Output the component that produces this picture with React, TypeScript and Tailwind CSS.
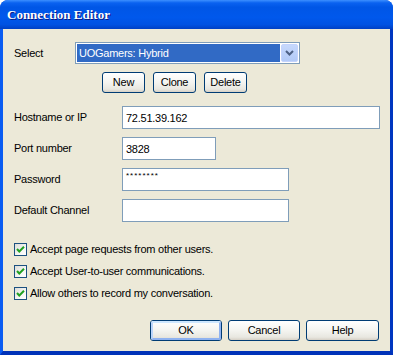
import React from "react";

const font = { fontFamily: '"Liberation Sans", Arial, sans-serif' };
const txt = "text-[11px] tracking-[-0.25px] text-black";

function XPButton({ label, w, def }: { label: string; w: number; def?: boolean }) {
  return (
    <div
      className={`h-[21px] rounded-[3px] border border-[#003C74] bg-[linear-gradient(to_bottom,#FFFFFF_0%,#F4F4F0_50%,#E8E7E0_85%,#D6D0C5_100%)] flex items-center justify-center ${txt}`}
      style={{ width: w }}
    >
      {def ? (
        <div className="w-full h-full rounded-[2px] border-[2px] border-[#8FB2F0] border-t-[#CEE7FF] border-l-[#BCD5FA] flex items-center justify-center">
          {label}
        </div>
      ) : (
        label
      )}
    </div>
  );
}

function Check({ label }: { label: string }) {
  return (
    <div className="h-[14px] flex items-center">
      <div className="w-[13px] h-[13px] border border-[#1C5180] bg-[linear-gradient(135deg,#DCDCD7_0%,#F6F6F4_60%,#FFFFFF_100%)] flex items-center justify-center">
        <svg width="11" height="11" viewBox="0 0 11 11">
          <path d="M2 5 L4.3 7.5 L9 2.8" fill="none" stroke="#21A121" strokeWidth="2" />
        </svg>
      </div>
      <span className={`ml-[3px] ${txt}`}>{label}</span>
    </div>
  );
}

function Field({ label, w, children }: { label: string; w: number; children?: React.ReactNode }) {
  return (
    <div className="flex items-center h-[23px]">
      <div className={`w-[108px] ${txt}`}>{label}</div>
      <div
        className={`h-[23px] border border-[#7F9DB9] bg-white flex items-start pl-[3px] pt-[3px] ${txt}`}
        style={{ width: w }}
      >
        {children}
      </div>
    </div>
  );
}

export default function App() {
  return (
    <div className="w-[393px] h-[355px] flex flex-col rounded-t-[8px] overflow-hidden bg-[#0348D8]" style={font}>
      <div className="h-[29px] shrink-0 flex items-center pl-[7px] bg-[linear-gradient(to_bottom,#3C8FFF_0%,#0A62F0_10%,#0056E6_25%,#0058EC_60%,#0052E2_85%,#0040C4_100%)]">
        <span
          className="text-white font-bold text-[13px] [text-shadow:1px_1px_0_#0A1883] leading-none"
          style={{ fontFamily: '"Liberation Serif", "Times New Roman", serif' }}
        >
          Connection Editor
        </span>
      </div>
      <div className="flex-1 flex border-x-[3px] border-b-[4px] border-l-[#0A5CF2] border-r-[#0036C0] border-b-[#0032B8]">
        <div className="flex-1 bg-[#ECE9D8] flex flex-col pl-[11px]">
          <div className="mt-[13px] h-[22px] flex items-center">
            <div className={`w-[61px] ${txt}`}>Select</div>
            <div className="w-[225px] h-[22px] border border-[#7F9DB9] bg-white p-[1px] flex">
              <div className="flex-1 bg-[#316AC5] text-white text-[11px] tracking-[-0.25px] flex items-center pl-[2px]">UOGamers: Hybrid</div>
              <div className="w-[17px] ml-[1px] bg-[linear-gradient(to_bottom,#C6D8FC,#B2CAF7)] border border-[#C3D3FD] rounded-[2px] flex items-center justify-center">
                <svg width="9" height="6" viewBox="0 0 9 6">
                  <path d="M1 1 L4.5 4.5 L8 1" fill="none" stroke="#4D6185" strokeWidth="2" />
                </svg>
              </div>
            </div>
          </div>
          <div className="mt-[8px] ml-[88px] flex gap-[8px]">
            <XPButton label="New" w={43} />
            <XPButton label="Clone" w={43} />
            <XPButton label="Delete" w={43} />
          </div>
          <div className="mt-[13px] flex flex-col gap-[8px]">
            <Field label="Hostname or IP" w={258}>72.51.39.162</Field>
            <Field label="Port number" w={94}>3828</Field>
            <Field label="Password" w={167}>
              <span className="text-[8px] leading-[8px] tracking-[1px]">********</span>
            </Field>
            <Field label="Default Channel" w={167} />
          </div>
          <div className="mt-[20px] flex flex-col gap-[8px]">
            <Check label="Accept page requests from other users." />
            <Check label="Accept User-to-user communications." />
            <Check label="Allow others to record my conversation." />
          </div>
          <div className="mt-[20px] ml-[136px] flex gap-[6px]">
            <XPButton label="OK" w={72} def />
            <XPButton label="Cancel" w={72} />
            <XPButton label="Help" w={73} />
          </div>
        </div>
      </div>
    </div>
  );
}
